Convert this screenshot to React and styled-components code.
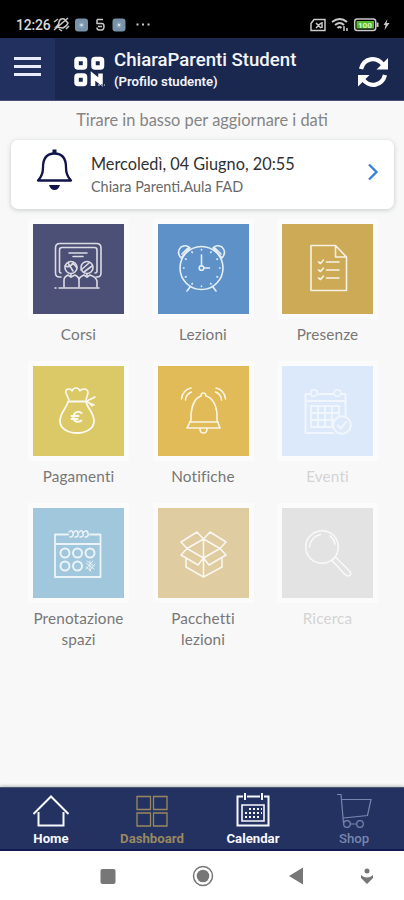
import React from 'react';
import styled, { createGlobalStyle } from 'styled-components';

const GlobalStyle = createGlobalStyle`
  * {
    box-sizing: border-box;
  }

  body {
    margin: 0;
    background-color: #f8f8f8;
    font-family: Lato, "Liberation Sans", sans-serif;
  }

  svg {
    display: block;
    flex: none;
  }
`;

const PageWrapper = styled.div`
  width: 404px;
  height: 900px;
  display: flex;
  flex-direction: column;
  overflow: hidden;
  background-color: #f8f8f8;
`;

const StatusBar = styled.div`
  height: 38px;
  padding: 11px 13px 0 16px;
  display: flex;
  justify-content: space-between;
  background-color: #000000;
  color: #d8d8d8;

  .time {
    width: 37px;
    font: 500 14px/28px Roboto, sans-serif;
    letter-spacing: -0.2px;
  }

  .group {
    display: flex;
  }
`;

const Header = styled.header`
  height: 63px;
  display: flex;
  background-color: #1a2850;
  border-bottom: 1px solid #4c4f7b;
  color: #f4f5fa;
  font-family: Roboto, sans-serif;

  .menu {
    width: 55px;
    height: 62px;
    padding: 18px 0 0 14px;
    background-color: #22305f;
  }

  .logo {
    margin: 18px 9px 0 19px;
  }

  .refresh {
    margin: 17px 14px 0 auto;
  }
`;

const Profile = styled.div`
  padding-top: 11px;

  .name {
    font-size: 18.6px;
    font-weight: 500;
    line-height: 23px;
    white-space: nowrap;
  }

  .role {
    font-size: 13.2px;
    font-weight: 600;
    line-height: 20px;
  }
`;

const PullHint = styled.p`
  height: 39px;
  margin: 0;
  text-align: center;
  color: #858585;
  font-size: 16.4px;
  line-height: 38px;
`;

const NoticeCard = styled.div`
  height: 69px;
  margin: 0 10px 0 11px;
  padding: 0 14px 0 24px;
  display: flex;
  align-items: flex-start;
  border-radius: 7px;
  background-color: #ffffff;
  box-shadow: 0 1px 5px rgba(70, 90, 90, 0.28);

  .bell {
    margin-top: 7px;
  }

  .text {
    flex: 1;
    margin: 12px 0 0 17px;
    white-space: nowrap;
  }

  .date {
    color: #303030;
    font-size: 16.3px;
    line-height: 24px;
  }

  .place {
    color: #686868;
    font-size: 14.4px;
    line-height: 22px;
  }

  .arrow {
    margin-top: 21px;
  }
`;

const Grid = styled.main`
  flex: 1;
  display: grid;
  grid-template-columns: repeat(3, 91px);
  grid-auto-rows: 142px;
  column-gap: 33.5px;
  padding: 15px 0 0 33px;
`;

const Tile = styled.div`
  .square {
    height: 90px;
    background-color: ${(props) => props.$color};
    box-shadow: 0 0 0 5px rgba(255, 255, 255, 0.45);
  }

  .label {
    margin: 10px -10px 0;
    text-align: center;
    color: ${(props) => (props.$disabled ? '#d4d4d4' : '#777777')};
    font-size: 15.3px;
    line-height: 21px;
    letter-spacing: 0.15px;
    white-space: pre-line;
  }
`;

const TabBar = styled.nav`
  height: 64px;
  display: grid;
  grid-template-columns: repeat(4, 1fr);
  background-color: #233261;
  border-top: 1px solid #4a5573;
  border-bottom: 2px solid #141b52;
  box-shadow: 0 -1px 3px rgba(0, 0, 0, 0.25);
`;

const Tab = styled.div`
  display: flex;
  flex-direction: column;
  align-items: center;
  padding: 5px 0 0 1px;
  color: ${(props) => props.$color};
  font: ${(props) => (props.$light ? 500 : 700)} 13.2px/16px Roboto, sans-serif;

  svg {
    margin-bottom: 2px;
  }
`;

const SystemBar = styled.div`
  height: 49px;
  padding: 0 28px 0 99px;
  display: flex;
  align-items: center;
  background-color: #ffffff;

  .home {
    margin-left: 73.5px;
  }

  .back {
    margin-left: 73.5px;
  }

  .hide {
    margin-left: auto;
  }
`;

function TileIcon({ children, opacity = 0.85 }) {
  return (
    <svg width="91" height="90" viewBox="0 0 91 90" fill="none" stroke="#ffffff" strokeWidth="1.6"
      strokeLinecap="round" strokeLinejoin="round" opacity={opacity}>
      {children}
    </svg>
  );
}

const coursesIcon = (
  <TileIcon opacity={0.8}>
    <path d="M28 53h-1.500q-4 0-4-4V24q0-4.500 4.500-4.500h36.500q4.500 0 4.500 4.500v25q0 4-4 4H63" />
    <path d="M28 49q-1.500 0-1.500-2V26q0-2.500 2.500-2.500h32.500q2.500 0 2.500 2.500v21q0 2-2 2" />
    <path d="M36 29h18M40 32.500h10" />
    <circle cx="38" cy="43.500" r="6" />
    <circle cx="54" cy="43.500" r="6" />
    <path d="M32 42q5 2 8-3l4 5M35 39l5 8M48 46l8-7M51 48l8-6M38 50v3M54 50v3" />
    <path d="M31 63v-7q0-3 4-5l3 2 4-2q4 2 4 5v7M46 56q0-3 5-5l3 2 3-2q6 2 7 6v6" />
    <path d="M26 64h40M22 64h1" />
  </TileIcon>
);

const clockIcon = (
  <TileIcon>
    <circle cx="43.500" cy="44" r="21.500" />
    <path d="M23 34q-5-6 0-11 6-3 9 1zM64 34q5-6 0-11-6-3-9 1zM24 30l6-6M63 30l-6-6M32 63l-3 4M55 63l3 4" />
    <path d="M43.500 31v11M46 44h5.500M43.500 25.500v.5M43.500 62v.5M25.500 44h.5M61.500 44h.5M34 28l.3.500M53 28l-.3.500M27.500 35l.5.300M59.500 35l-.5.300M27.500 53l.5-.300M59.500 53l-.5-.300M34 60l.3-.500M53 60l-.3-.500" />
    <circle cx="43.500" cy="44" r="2.300" />
  </TileIcon>
);

const presenceIcon = (
  <TileIcon>
    <path d="M29 21.500h24.500L64.500 33v33.500H29zM53.500 21.500V33h11" />
    <path d="M44.500 38H57M44.500 46H57M44.500 54H57" />
    <path d="M36.500 38l2 1.500 3-3.500M36.500 46l2 1.500 3-3.500M36.500 54l2 1.500 3-3.500" />
  </TileIcon>
);

const paymentIcon = (
  <TileIcon opacity={0.9}>
    <path d="M36 34l-3-7q-1-4 3-4 2 0 3 2 1-3 4-3t4 3q1-2 4-2 4 0 4 4l-2 7" />
    <path d="M35 35.500h19M35 36c-2 7-8 11-8 19 0 16 34 16 34 0 0-8-6-12-8-19" strokeWidth="1.800" />
    <path d="M54 35l8-4M54 36l7 3M54 35l5 5" />
    <path d="M48.500 47q-5-3-7.500 1.500-2 5 2 7 3 1 5.500-1M38.500 50h7M38.500 53h6" strokeWidth="2" />
  </TileIcon>
);

const notifyIcon = (
  <TileIcon>
    <path d="M33 54V48c1-10 4-16 10-18q0-3 2.500-3t2.500 3c7 2 10 8 11 18v6l3 8H29zM31.500 56H60M42 63q0 4 3.500 4t3.500-4" />
    <path d="M23.500 33q1-9 9.500-11M27.500 34q.5-6 6-8M67.500 33q-1-9-9.500-11M63.500 34q-.5-6-6-8" />
  </TileIcon>
);

const eventsIcon = (
  <TileIcon opacity={0.6}>
    <path d="M51 67H23.500V28H29M35.500 28H52M59 28h4.500v22M24 35h39" strokeWidth="2" />
    <circle cx="32" cy="27" r="3.300" />
    <circle cx="55.500" cy="27" r="3.300" />
    <path d="M29 40h28v9M51 61H29V40M29 47h28M29 54h24M36 40v21M43 40v21M50 40v21" strokeWidth="1.800" />
    <circle cx="60" cy="59" r="8.800" strokeWidth="2" />
    <path d="M56 59.500l3 3 5-6.500" strokeWidth="2" />
  </TileIcon>
);

const roomIcon = (
  <TileIcon opacity={0.8}>
    <path d="M35 26.500H22V69h45.500V26.500H57M22 36h45.500" strokeWidth="1.800" />
    <path d="M36 24q3-3 4 1t-3 4M41 24q3-3 4 1t-3 4M46 24q3-3 4 1t-3 4M51 24q3-3 4 1t-3 4" />
    {[32, 44.5, 57].map((x) => <circle key={x} cx={x} cy="45" r="4.500" strokeWidth="2" />)}
    {[32, 44.5].map((x) => <circle key={x} cx={x} cy="58" r="4.500" strokeWidth="2" />)}
    <path d="M53 55l8 6M54 53l7 5M53 59l5 4M53 61l7-8M57 62l5-6M57 53v10" strokeWidth="0.900" />
  </TileIcon>
);

const packIcon = (
  <TileIcon>
    <path d="M45.500 31L39 24 23 34l6 6.500 16.500-9.500 16.500 9.500 6-6.500-16-10zM29 40.500l-6 6.500L40 57l5.500-7L51 57l17-10-6-6.500L45.500 50zM45.500 31v38M28 51v8l17.500 10L64 59v-8" />
  </TileIcon>
);

const searchIcon = (
  <TileIcon opacity={0.8}>
    <circle cx="40" cy="39" r="16.300" />
    <path d="M27.500 39q1-10 11-12.500M48 28q4 3 5 8" />
    <path d="M50 52.500l3.500-3.500 14 14q3 4-1 5-2 0-4-2z" />
  </TileIcon>
);

const tiles = [
  { label: 'Corsi', color: '#4d5076', icon: coursesIcon },
  { label: 'Lezioni', color: '#5d91c8', icon: clockIcon },
  { label: 'Presenze', color: '#cdaa56', icon: presenceIcon },
  { label: 'Pagamenti', color: '#dbc968', icon: paymentIcon },
  { label: 'Notifiche', color: '#e1bb57', icon: notifyIcon },
  { label: 'Eventi', color: '#dce9fa', icon: eventsIcon, disabled: true },
  { label: 'Prenotazione\nspazi', color: '#a1c7dc', icon: roomIcon },
  { label: 'Pacchetti\nlezioni', color: '#dfcca0', icon: packIcon },
  { label: 'Ricerca', color: '#e3e3e3', icon: searchIcon, disabled: true },
];

function TabIcon({ children, strokeWidth = 2 }) {
  return (
    <svg width="38" height="36" viewBox="0 0 38 36" fill="none" stroke="currentColor" strokeWidth={strokeWidth}>
      {children}
    </svg>
  );
}

const tabs = [
  {
    label: 'Home',
    color: '#f7f8ff',
    icon: <TabIcon><path d="M1.500 21L19 3.500 36.500 21M6.500 19v13.500h25V19" /></TabIcon>,
  },
  {
    label: 'Dashboard',
    color: '#99885f',
    icon: (
      <TabIcon strokeWidth={1.3}>
        <path d="M4 3.500h13.500v13H4zM20.500 3.500H34v13H20.500zM4 20h13.500v13H4zM20.500 20H34v13H20.500z" />
      </TabIcon>
    ),
  },
  {
    label: 'Calendar',
    color: '#f7f8ff',
    icon: (
      <TabIcon>
        <path d="M9 3.500H3.500V32.500h31V3.500H30M13 3.500h13M11 0v7M28 0v7" />
        <path d="M8 12h22v16H8z" strokeWidth="1.600" />
        <path d="M15 16h13M11 20h17M11 24h14" strokeWidth="2" strokeDasharray="2 2" />
      </TabIcon>
    ),
  },
  {
    label: 'Shop',
    color: '#7886ae',
    light: true,
    icon: (
      <TabIcon strokeWidth={1.2}>
        <path d="M2 1.500h4l2.500 29M7 6.500h29l-3.500 16-24 2.500M15 31h6" />
        <circle cx="12" cy="31" r="3.300" />
        <circle cx="25" cy="31" r="3.300" />
      </TabIcon>
    ),
  },
];

function StatusIcons() {
  return (
    <svg width="100" height="27" viewBox="54 11 100 27" fill="none" stroke="#c9c9c9" strokeWidth="1.500">
      <path d="M57 27q3-2 3-5 1-4 5-3l4 4q-1 3-5 5zM55 30L69 18M60 29l3 2M55 22l4-3M67 29l3-3" />
      <rect x="76" y="18.500" width="13" height="13" rx="3" fill="#7893a9" stroke="none" />
      <circle cx="82.500" cy="25" r="2" fill="#d7e4ed" stroke="#8ea6b8" />
      <path d="M98 19.500h6M98 19.500v4h5q2 0 2 3t-2 3.500h-3q-2 0-2-2.500M99 26.500h4" />
      <rect x="113.500" y="18.500" width="13" height="13" rx="3" fill="#7893a9" stroke="none" />
      <circle cx="120" cy="25" r="2" fill="#d7e4ed" stroke="#8ea6b8" />
      <path d="M137.500 24.500h2M143 24.500h2M148.500 24.500h2" strokeWidth="2" />
    </svg>
  );
}

function DeviceIcons() {
  return (
    <svg width="82" height="27" viewBox="309 11 82 27" fill="none" stroke="#c9c9c9" strokeWidth="1.500">
      <path d="M314 19.500h11v11h-14v-7zM316 23l5 5M321 23l-5 5M322 22v6" />
      <path d="M332 22q8-6 15 0M335 25q5-4 9 0M337.500 28q2-2 4 0" strokeWidth="2" />
      <path d="M344 26v5M347 28v3" />
      <rect x="354.700" y="19" width="21" height="11.500" rx="2.500" />
      <rect x="356.500" y="21" width="17.500" height="7.500" fill="#55b92e" stroke="none" />
      <path d="M377.500 22.500v4.500" strokeWidth="2" />
      <text x="358" y="27.700" fill="#dcf5cb" stroke="none" fontFamily="Roboto" fontSize="8" fontWeight="700">100</text>
      <path d="M387.500 19l-4 6h2l-1 5 5-7h-3z" fill="#c9c9c9" stroke="none" />
    </svg>
  );
}

function App() {
  return (
    <>
      <GlobalStyle />
      <PageWrapper>
        <StatusBar>
          <div className="group">
            <div className="time">12:26</div>
            <StatusIcons />
          </div>
          <DeviceIcons />
        </StatusBar>

        <Header>
          <div className="menu">
            <svg width="27" height="21" stroke="#e7edff" strokeWidth="2.800">
              <path d="M0 2.500h27M0 10.500h27M0 18.500h27" />
            </svg>
          </div>
          <svg className="logo" width="31" height="32" viewBox="0 0 31 32" fill="none" stroke="#ffffff" strokeWidth="4.500">
            <rect x="2.500" y="3" width="8.500" height="8.500" rx="1.500" />
            <rect x="19.500" y="3" width="8.500" height="8.500" rx="1.500" />
            <rect x="2.500" y="19.500" width="8.500" height="8.500" rx="1.500" />
            <path d="M19 30V20l7.500 6v-8.500" />
            <path d="M24 29h7" stroke="#8490aa" strokeWidth="2" strokeDasharray="2 1" />
          </svg>
          <Profile>
            <div className="name">ChiaraParenti Student</div>
            <div className="role">(Profilo studente)</div>
          </Profile>
          <svg className="refresh" width="34" height="34" viewBox="0 0 34 34" fill="none" stroke="#ffffff" strokeWidth="4.300">
            <path d="M5 14C8 3 20 1 27 9.500M29 20C26 31 14 33 7 24.500" />
            <path d="M32 3v11.500H20.500zM2 31.500V20h11.500z" fill="#ffffff" stroke="none" />
          </svg>
        </Header>

        <PullHint>Tirare in basso per aggiornare i dati</PullHint>

        <NoticeCard>
          <svg className="bell" width="39" height="44" viewBox="0 0 39 44" fill="none" stroke="#11134b" strokeWidth="2.300">
            <path d="M3 33.500q5-5 5-13 0-14 11.500-14T31 20.500q0 8 5 13z" strokeLinejoin="round" />
            <path d="M19.500 2.500v4" strokeWidth="4" />
            <path d="M14 38h11q-1.500 5-5.500 5t-5.500-5z" fill="#11134b" stroke="none" />
          </svg>
          <div className="text">
            <div className="date">Mercoledì, 04 Giugno, 20:55</div>
            <div className="place">Chiara Parenti.Aula FAD</div>
          </div>
          <svg className="arrow" width="14" height="22" viewBox="0 0 14 22" fill="none" stroke="#3483d6" strokeWidth="2.300">
            <path d="M3 3.500l7.500 7.500L3 18.500" />
          </svg>
        </NoticeCard>

        <Grid>
          {tiles.map((tile) => (
            <Tile key={tile.label} $color={tile.color} $disabled={tile.disabled}>
              <div className="square">{tile.icon}</div>
              <div className="label">{tile.label}</div>
            </Tile>
          ))}
        </Grid>

        <TabBar>
          {tabs.map((tab) => (
            <Tab key={tab.label} $color={tab.color} $light={tab.light}>
              {tab.icon}
              {tab.label}
            </Tab>
          ))}
        </TabBar>

        <SystemBar>
          <svg width="18" height="24" fill="#777777"><rect x="1.500" y="5" width="15" height="15" rx="2" /></svg>
          <svg className="home" width="24" height="24" fill="#777777">
            <circle cx="12" cy="12" r="6.300" />
            <circle cx="12" cy="12" r="9.500" fill="none" stroke="#777777" strokeWidth="1.500" />
          </svg>
          <svg className="back" width="16" height="24" fill="#777777"><path d="M15 3.500v17L1 12z" /></svg>
          <svg className="hide" width="18" height="24" fill="#777777">
            <circle cx="9" cy="7" r="2.500" />
            <path d="M3 11q3 2.500 6 2.500t6-2.500v3l-6 6-6-6z" />
          </svg>
        </SystemBar>
      </PageWrapper>
    </>
  );
}

export default App;
